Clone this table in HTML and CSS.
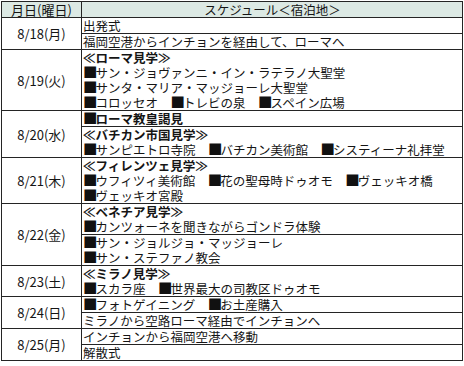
FILE: index.html
```html
<!DOCTYPE html>
<html lang="ja">
<head>
<meta charset="utf-8">
<title>スケジュール</title>
<link rel="stylesheet" href="styles.css">
</head>
<body>
<table class="sched">
  <thead>
    <tr><th class="date">月日(曜日)</th><th class="plan">スケジュール＜宿泊地＞</th></tr>
  </thead>
  <tbody>
    <tr><td class="date" rowspan="2">8/18(月)</td><td>出発式</td></tr>
    <tr><td>福岡空港からインチョンを経由して、ローマへ</td></tr>
    <tr><td class="date">8/19(火)</td><td><b>≪ローマ見学≫</b><br><span class="sq">■</span>サン・ジョヴァンニ・イン・ラテラノ大聖堂<br><span class="sq">■</span>サンタ・マリア・マッジョーレ大聖堂<br><span class="sq">■</span>コロッセオ　<span class="sq">■</span>トレビの泉　<span class="sq">■</span>スペイン広場</td></tr>
    <tr><td class="date" rowspan="2">8/20(水)</td><td><b><span class="sq">■</span>ローマ教皇謁見</b></td></tr>
    <tr><td><b>≪バチカン市国見学≫</b><br><span class="sq">■</span>サンピエトロ寺院　<span class="sq">■</span>バチカン美術館　<span class="sq">■</span>システィーナ礼拝堂</td></tr>
    <tr><td class="date">8/21(木)</td><td><b>≪フィレンツェ見学≫</b><br><span class="sq">■</span>ウフィツィ美術館　<span class="sq">■</span>花の聖母時ドゥオモ　<span class="sq">■</span>ヴェッキオ橋<br><span class="sq">■</span>ヴェッキオ宮殿</td></tr>
    <tr><td class="date" rowspan="2">8/22(金)</td><td><b>≪ベネチア見学≫</b><br><span class="sq">■</span>カンツォーネを聞きながらゴンドラ体験</td></tr>
    <tr><td><span class="sq">■</span>サン・ジョルジョ・マッジョーレ<br><span class="sq">■</span>サン・ステファノ教会</td></tr>
    <tr><td class="date">8/23(土)</td><td><b>≪ミラノ見学≫</b><br><span class="sq">■</span>スカラ座　<span class="sq">■</span>世界最大の司教区ドゥオモ</td></tr>
    <tr><td class="date" rowspan="2">8/24(日)</td><td><span class="sq">■</span>フォトゲイニング　<span class="sq">■</span>お土産購入</td></tr>
    <tr><td>ミラノから空路ローマ経由でインチョンへ</td></tr>
    <tr><td class="date" rowspan="2">8/25(月)</td><td>インチョンから福岡空港へ移動</td></tr>
    <tr><td>解散式</td></tr>
  </tbody>
</table>
</body>
</html>
```
FILE: styles.css
```css
html, body {
  margin: 0;
  padding: 0;
  background: #ffffff;
}
body {
  padding: 1px 0 0 1px;
  font-family: "Noto Sans CJK JP", "Noto Sans", sans-serif;
  font-size: 12.5px;
  color: #151515;
}
.sched {
  border-collapse: collapse;
  width: 462px;
  table-layout: fixed;
}
.sched th,
.sched td {
  border: 1px solid #242424;
  padding: 0 0 0 1px;
  line-height: 15px;
  text-align: left;
  vertical-align: middle;
  font-weight: normal;
  white-space: nowrap;
}
.sched thead th {
  background: #dce9e4;
  text-align: center;
  height: 15px;
}
.sched .date {
  width: 79px;
  padding: 0;
  text-align: center;
  font-size: 13px;
}
.sched b {
  font-weight: bold;
}
.sq {
  font-size: 14.5px;
  line-height: 13px;
  letter-spacing: -2px;
  color: #111;
}
```
